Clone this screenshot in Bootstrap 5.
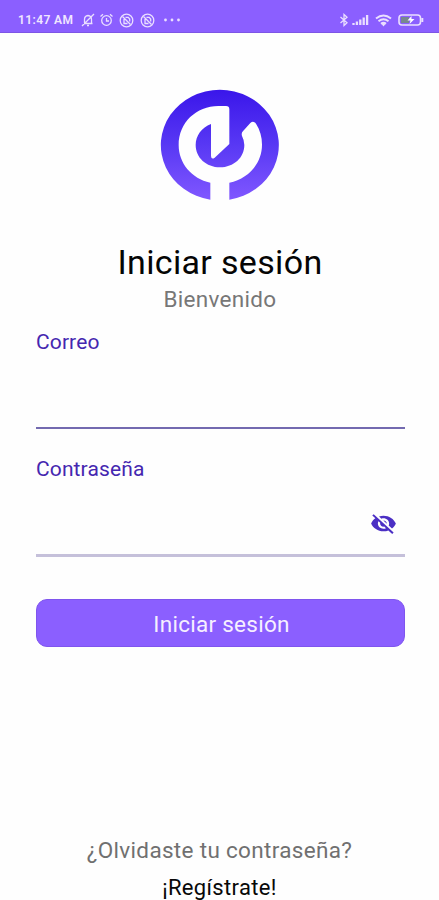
<!DOCTYPE html>
<html lang="es">
<head>
<meta charset="utf-8">
<meta name="viewport" content="width=device-width, initial-scale=1">
<title>Iniciar sesión</title>
<link href="https://cdn.jsdelivr.net/npm/bootstrap@5.3.0/dist/css/bootstrap.min.css" rel="stylesheet">
<style>
body { font-family: Roboto, "Liberation Sans", sans-serif; background: #fefefe; color: #050505; }
.screen { height: 900px; }
.status { height: 33px; background: #8b5fff; border-bottom: 1px solid #7d55e6; color: #f0e6ff; padding: 8px 15px 0 18px; }
.clock { font-size: 12px; letter-spacing: .4px; font-weight: 600; line-height: 24px; width: 63px; white-space: nowrap; }
.status svg { display: block; fill: none; stroke: #eadfff; stroke-width: 1.3; }
.logo { margin: 47px 0 0 150px; }
.t { line-height: 30px; white-space: nowrap; }
.title { font-size: 34px; letter-spacing: .33px; line-height: 40px; margin-top: 32px; padding-left: 1px; }
.welcome { font-size: 22.5px; letter-spacing: .3px; color: #777; margin-top: 2px; padding-left: 1px; }
.form-area { padding: 0 34px 0 36px; }
.field-label { font-size: 21px; letter-spacing: .12px; color: #4527b0; }
.field { height: 72px; border: 0; border-bottom: 2px solid #736ab0; border-radius: 0; background: transparent; padding: 0; }
.field:focus { box-shadow: none; background: transparent; }
.pass { border-bottom: 0; }
.pass-row { height: 73px; border-bottom: 3px solid #c5c0da; padding-right: 8px; }
.eye { margin-top: 8px; }
.btn-login { height: 48px; border-radius: 11px; background: #8b5fff; border: 1px solid #7f55ee; color: #f6efff; font-size: 22.5px; letter-spacing: .27px; line-height: 30px; margin-top: 42px; padding: 2px 0 0 2px; }
.btn-login:hover { background: #7d51f2; color: #fff; }
.forgot { font-size: 22.5px; letter-spacing: .32px; color: #707070; }
.register { font-size: 22px; letter-spacing: .35px; color: #080808; margin-top: 8px; height: 27px; }
</style>
<script src="https://cdn.jsdelivr.net/npm/bootstrap@5.3.0/dist/js/bootstrap.bundle.min.js"></script>
</head>
<body>
<div class="screen d-flex flex-column overflow-hidden">
  <header class="status d-flex align-items-center flex-shrink-0">
    <span class="clock"><span>11:47 AM</span></span>
    <svg width="14" height="14" viewBox="0 0 14 14"><path d="M3 10.500h8.500M3.500 10V6.500Q3.500 3 7 2.500 10.500 3 10.500 6.500V10M1 13 13 1M6 12.500h2"/></svg>
    <svg width="15" height="14" viewBox="0 0 14 14" style="margin-left:4px"><circle cx="7" cy="7.500" r="4.800"/><path d="M7 5v3h2.500M1 3.500 3.500 1.300M13 3.500 10.500 1.300"/></svg>
    <svg width="15" height="15" viewBox="0 0 15 15" style="margin-left:5px"><circle cx="7.500" cy="7.500" r="6.300"/><path d="M3.500 3.500 11.500 11.500M5 6v4.500h3.500M6.500 4.300h2.700l1.500 1.700v2.500"/></svg>
    <svg width="15" height="15" viewBox="0 0 15 15" style="margin-left:6px"><circle cx="7.500" cy="7.500" r="6.300"/><path d="M3.500 3.500 11.500 11.500M5 6v4.500h3.500M6.500 4.300h2.700l1.500 1.700v2.500"/></svg>
    <svg width="18" height="4" viewBox="0 0 18 4" style="margin-left:8px"><g fill="#eadfff" stroke="none"><circle cx="2.500" cy="2" r="1.400"/><circle cx="9" cy="2" r="1.400"/><circle cx="15.500" cy="2" r="1.400"/></g></svg>
    <div class="d-flex align-items-center ms-auto">
      <svg width="10" height="14" viewBox="0 0 10 14"><path d="M1.500 4 8 9.800 5 12.500V1.500L8 4.200 1.500 10"/></svg>
      <svg width="17" height="12" viewBox="0 0 17 12" style="margin-left:3px"><path stroke-width="2.300" d="M1.500 11V9M4.900 11V7.500M8.300 11V5.500M11.700 11V3.500M15.100 11V1"/></svg>
      <svg width="17" height="13" viewBox="0 0 17 13" style="margin-left:6px"><path stroke-width="2" d="M1 4.500Q8.500-1.500 16 4.500M3.500 7.200Q8.500 3.200 13.500 7.200M6 9.700Q8.500 7.700 11 9.700"/><path fill="#eadfff" stroke="none" d="m6.500 10 2-1.200 2 1.200-2 2.600z"/></svg>
      <svg width="26" height="12" viewBox="0 0 26 12" style="margin-left:6px"><rect x="1" y="1" width="21.500" height="10" rx="3" stroke-width="1.600"/><path fill="#78888f" stroke="none" d="M3 3h8v6H3z"/><path fill="#fff" stroke="none" d="m13.500 2-4 4.500h3L11.500 10l5-5h-3z"/><path stroke-width="2" d="M24.300 4v4"/></svg>
    </div>
  </header>

  <main class="d-flex flex-column flex-grow-1">
    <svg class="logo flex-shrink-0" width="140" height="130" viewBox="0 0 420 390" role="img" aria-label="Logo">
      <defs><linearGradient id="violet" x1="0" y1="0" x2="0" y2="1"><stop offset="0" stop-color="#3a16ea"/><stop offset=".5" stop-color="#5838f4"/><stop offset="1" stop-color="#8057ff"/></linearGradient></defs>
      <path fill="url(#violet)" d="M181 359A177 166 0 1 1 238 359Z"/>
      <path fill="#fefefe" d="M181 363V308C125 296 86 250 86 195C86 128 139 78 205 78H228Q238 78 238 88V192L194 233Q184 240 183 228V132C155 143 137 167 137 195C137 233 169 262 210 262C251 262 283 233 283 195Q283 181 276 168Q273 158 280 152L301 129Q310 120 318 131C330 150 336 170 336 194C336 250 295 296 238 308V363Z"/>
    </svg>
    <h1 class="title t text-center mb-0 fw-normal"><span>Iniciar sesión</span></h1>
    <p class="welcome t text-center mb-0"><span>Bienvenido</span></p>
    <form class="form-area" onsubmit="return false">
      <label class="field-label t d-block" for="mail" style="margin-top:13px"><span>Correo</span></label>
      <input class="form-control field" id="mail" type="email">
      <label class="field-label t d-block" for="pass" style="margin-top:25px"><span>Contraseña</span></label>
      <div class="pass-row d-flex align-items-center">
        <input class="form-control field pass" id="pass" type="password">
        <svg class="eye flex-shrink-0" width="27" height="25" viewBox="0 0 24 24" preserveAspectRatio="none" fill="#4b2fc4"><path d="M12 7c2.760 0 5 2.240 5 5 0 .650-.130 1.260-.360 1.830l2.920 2.920c1.510-1.260 2.700-2.890 3.430-4.750-1.730-4.390-6-7.500-11-7.500-1.400 0-2.740.250-3.980.700l2.160 2.160C10.740 7.130 11.350 7 12 7zM2 4.270l2.280 2.280.460.460C3.080 8.300 1.780 10.020 1 12c1.730 4.390 6 7.500 11 7.500 1.550 0 3.030-.300 4.380-.840l.420.420L19.730 22 21 20.730 3.270 3 2 4.270zM7.530 9.800l1.550 1.550c-.050.210-.080.430-.080.650 0 1.660 1.340 3 3 3 .220 0 .440-.030.650-.080l1.550 1.550c-.670.330-1.410.530-2.200.530-2.760 0-5-2.240-5-5 0-.790.200-1.530.530-2.200zm4.310-.780 3.150 3.150.020-.160c0-1.660-1.340-3-3-3l-.170.010z"/></svg>
      </div>
      <button class="btn btn-login w-100 d-block" type="submit"><span>Iniciar sesión</span></button>
    </form>
    <div class="mt-auto text-center">
      <div class="forgot t"><span>¿Olvidaste tu contraseña?</span></div>
      <div class="register t"><span>¡Regístrate!</span></div>
    </div>
  </main>
</div>
</body>
</html>
